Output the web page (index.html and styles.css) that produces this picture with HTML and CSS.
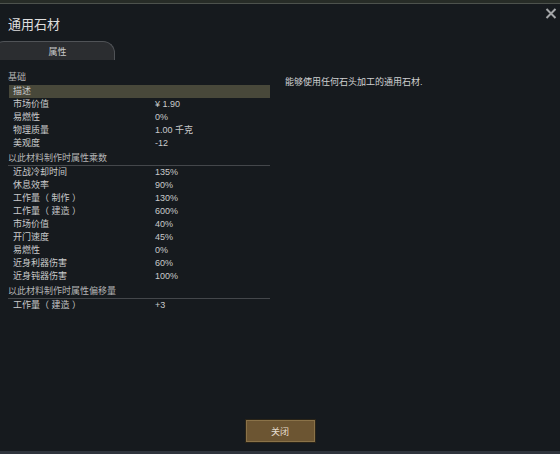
FILE: index.html
```html
<!DOCTYPE html>
<html>
<head>
<meta charset="utf-8">
<link rel="stylesheet" href="styles.css">
</head>
<body>
<div class="window">
  <div class="topbar"></div>
  <div class="header">
    <div class="title">通用石材</div>
    <div class="close">
      <svg width="12" height="11" viewBox="0 0 12 11"><path d="M1.5 1 L10.5 10 M10.5 1 L1.5 10" stroke="#a4a6a8" stroke-width="2" fill="none"/></svg>
    </div>
  </div>
  <div class="tabs"><div class="tab">属性</div></div>
  <div class="content">
    <div class="left">
      <div class="sec first">基础</div>
      <div class="row hl"><span class="k">描述</span><span class="v"></span></div>
      <div class="row"><span class="k">市场价值</span><span class="v">¥ 1.90</span></div>
      <div class="row"><span class="k">易燃性</span><span class="v">0%</span></div>
      <div class="row"><span class="k">物理质量</span><span class="v">1.00 千克</span></div>
      <div class="row"><span class="k">美观度</span><span class="v">-12</span></div>
      <div class="sec">以此材料制作时属性乘数</div>
      <div class="row"><span class="k">近战冷却时间</span><span class="v">135%</span></div>
      <div class="row"><span class="k">休息效率</span><span class="v">90%</span></div>
      <div class="row"><span class="k">工作量（ 制作 ）</span><span class="v">130%</span></div>
      <div class="row"><span class="k">工作量（ 建造 ）</span><span class="v">600%</span></div>
      <div class="row"><span class="k">市场价值</span><span class="v">40%</span></div>
      <div class="row"><span class="k">开门速度</span><span class="v">45%</span></div>
      <div class="row"><span class="k">易燃性</span><span class="v">0%</span></div>
      <div class="row"><span class="k">近身利器伤害</span><span class="v">60%</span></div>
      <div class="row"><span class="k">近身钝器伤害</span><span class="v">100%</span></div>
      <div class="sec">以此材料制作时属性偏移量</div>
      <div class="row"><span class="k">工作量（ 建造 ）</span><span class="v">+3</span></div>
    </div>
    <div class="right">能够使用任何石头加工的通用石材.</div>
  </div>
  <div class="footer"><div class="btn">关闭</div></div>
  <div class="bottombar"></div>
</div>
</body>
</html>
```
FILE: styles.css
```css
html, body {
  margin: 0;
  padding: 0;
  background: #161a1e;
}
.window {
  width: 560px;
  height: 454px;
  display: flex;
  flex-direction: column;
  overflow: hidden;
  font-family: "Liberation Sans", "Noto Sans CJK SC", sans-serif;
  color: #c9cacb;
  background: #161a1e;
}
.topbar {
  height: 3px;
  background: #272c27;
  border-bottom: 1px solid #4d524d;
  flex: none;
}
.header {
  height: 37px;
  display: flex;
  justify-content: space-between;
  align-items: center;
  padding: 0 1px 0 8px;
  flex: none;
}
.title {
  font-size: 13px;
  color: #dedede;
  margin-top: 1px;
}
.close {
  align-self: flex-start;
  margin-top: 1px;
  width: 14px;
  height: 12px;
}
.tabs {
  height: 19px;
  flex: none;
  overflow: hidden;
  display: flex;
}
.tab {
  width: 123px;
  margin-left: -8px;
  height: 19px;
  box-sizing: border-box;
  background: #2b2d30;
  border: 1px solid #505357;
  border-bottom: none;
  border-radius: 12px 12px 0 0;
  font-size: 9px;
  color: #c8c9ca;
  display: flex;
  justify-content: center;
  align-items: center;
  padding-left: 8px;
}
.content {
  flex: 1;
  display: flex;
  padding-top: 11px;
}
.left {
  width: 262px;
  margin-left: 8px;
  display: flex;
  flex-direction: column;
}
.sec {
  height: 13px;
  line-height: 13px;
  font-size: 9px;
  color: #b3b4b5;
  border-bottom: 1px solid #44474b;
  margin-top: 2px;
}
.sec.first {
  margin-top: 0;
  border-bottom-color: transparent;
}
.row {
  height: 13px;
  line-height: 13px;
  font-size: 9px;
  display: flex;
  padding-left: 5px;
  white-space: pre;
}
.row.hl {
  background: #48483a;
  margin-left: 1px;
  padding-left: 4px;
}
.k {
  width: 142px;
  flex: none;
}
.v {
  flex: 1;
}
.right {
  margin-left: 15px;
  padding-top: 5px;
  font-size: 9px;
  line-height: 13px;
  color: #d0d1d2;
}
.footer {
  flex: none;
  display: flex;
  justify-content: center;
  padding-bottom: 8px;
}
.btn {
  width: 71px;
  height: 24px;
  box-sizing: border-box;
  background: #6c5532;
  border: 1px solid #2a2418;
  box-shadow: inset 0 0 0 1px #8a7248;
  font-size: 9px;
  color: #e6dece;
  display: flex;
  justify-content: center;
  align-items: center;
}
.bottombar {
  flex: none;
  height: 3px;
  background: #2f343c;
}
```
